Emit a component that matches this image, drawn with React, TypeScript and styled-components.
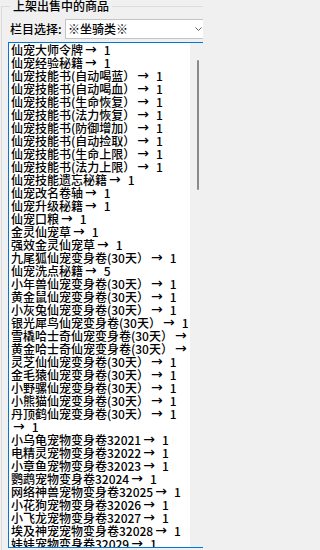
import React from "react";
import styled, { createGlobalStyle } from "styled-components";

const GlobalStyle = createGlobalStyle`
  html, body {
    margin: 0;
    padding: 0;
    background: #f0f0f0;
    overflow: hidden;
  }
  body {
    font-family: "Noto Sans CJK SC", "Liberation Sans", sans-serif;
    font-size: 12px;
    font-weight: 500;
    color: #000;
  }
`;

// whole dialog surface
const Window = styled.div`
  width: 203px;
  height: 550px;
  overflow: hidden;
  background: #f0f0f0;
`;

// group box with caption
const GroupBox = styled.fieldset`
  box-sizing: border-box;
  width: 240px;
  min-width: 0;
  margin: 0 0 0 1px;
  padding: 7px 0 0 8px;
  border: 1px solid #dcdcdc;
`;

const Caption = styled.legend`
  margin: 0;
  padding: 0 3px;
  font-size: 12px;
  line-height: 12px;
`;

// "栏目选择" row
const FilterRow = styled.div`
  display: flex;
  align-items: center;
  width: 198px;
  height: 20px;
  margin-bottom: 3px;
`;

const FilterLabel = styled.span`
  flex: 0 0 55px;
  line-height: 12px;
`;

const Combo = styled.div`
  box-sizing: border-box;
  flex: 0 0 143px;
  display: flex;
  align-items: center;
  justify-content: space-between;
  height: 20px;
  padding: 0 5px 0 2px;
  border: 1px solid #c4c4c4;
  background: #fff;
  line-height: 12px;
`;

// list box
const ListBox = styled.div`
  box-sizing: border-box;
  display: flex;
  width: 200px;
  height: 506px;
  margin-left: -2px;
  border: 1px solid #0078d7;
  background: #fff;
`;

const Items = styled.ul`
  flex: 1;
  min-width: 0;
  margin: 0;
  padding: 0 0 0 2px;
  list-style: none;
  overflow: hidden;
`;

const Item = styled.li`
  height: 13px;
  line-height: 13px;
  white-space: pre;
`;

const Arrow = styled.span`
  display: inline-block;
  margin: 0 7px 0 2px;
  font-family: "DejaVu Sans", sans-serif;
  font-size: 14px;
  font-weight: 400;
  line-height: 13px;
  vertical-align: top;
`;

const ScrollTrack = styled.div`
  flex: 0 0 17px;
  padding: 17px 0 0 7px;
  box-sizing: border-box;
  background: #f0f0f0;
`;

const Thumb = styled.div<{ $length: number }>`
  width: 2px;
  height: ${(p) => p.$length}px;
  background: #8a8a8a;
  border-radius: 1px;
`;

// bottom checkbox
const CheckRow = styled.label`
  display: flex;
  align-items: flex-start;
  gap: 3px;
  margin: 2px 0 0 10px;
  line-height: 13px;
`;

const CheckBox = styled.span`
  flex: 0 0 13px;
  height: 13px;
  border-radius: 3px;
  background: #0078d7;
`;

const items: [string, number][] = [
  ["仙宠大师令牌", 1],
  ["仙宠经验秘籍", 1],
  ["仙宠技能书(自动喝蓝）", 1],
  ["仙宠技能书(自动喝血）", 1],
  ["仙宠技能书(生命恢复）", 1],
  ["仙宠技能书(法力恢复）", 1],
  ["仙宠技能书(防御增加）", 1],
  ["仙宠技能书(自动捡取）", 1],
  ["仙宠技能书(生命上限）", 1],
  ["仙宠技能书(法力上限）", 1],
  ["仙宠技能遗忘秘籍", 1],
  ["仙宠改名卷轴", 1],
  ["仙宠升级秘籍", 1],
  ["仙宠口粮", 1],
  ["金灵仙宠草", 1],
  ["强效金灵仙宠草", 1],
  ["九尾狐仙宠变身卷(30天）", 1],
  ["仙宠洗点秘籍", 5],
  ["小年兽仙宠变身卷(30天）", 1],
  ["黄金鼠仙宠变身卷(30天）", 1],
  ["小灰兔仙宠变身卷(30天）", 1],
  ["银光犀鸟仙宠变身卷(30天）", 1],
  ["雪橇哈士奇仙宠变身卷(30天）", 1],
  ["黄金哈士奇仙宠变身卷(30天）", 1],
  ["灵芝仙仙宠变身卷(30天）", 1],
  ["金毛猿仙宠变身卷(30天）", 1],
  ["小野骡仙宠变身卷(30天）", 1],
  ["小熊猫仙宠变身卷(30天）", 1],
  ["丹顶鹤仙宠变身卷(30天）", 1],
  ["", 1],
  ["小乌龟宠物变身卷32021", 1],
  ["电精灵宠物变身卷32022", 1],
  ["小章鱼宠物变身卷32023", 1],
  ["鹦鹉宠物变身卷32024", 1],
  ["网络神兽宠物变身卷32025", 1],
  ["小花狗宠物变身卷32026", 1],
  ["小飞龙宠物变身卷32027", 1],
  ["埃及神宠宠物变身卷32028", 1],
  ["娃娃宠物变身卷32029", 1],
  ["小狮子宠物变身卷32030", 1],
];

const Chevron = () => (
  <svg width="7" height="4" viewBox="0 0 7 4">
    <polyline points="0.5,0.5 3.5,3.5 6.5,0.5" fill="none" stroke="#606060" strokeWidth="1" />
  </svg>
);

const App = () => {
  return (
    <Window>
      <GlobalStyle />
      <GroupBox>
        <Caption>上架出售中的商品</Caption>
        <FilterRow>
          <FilterLabel>栏目选择:</FilterLabel>
          <Combo>
            <span>※坐骑类※</span>
            <Chevron />
          </Combo>
        </FilterRow>
        <ListBox>
          <Items>
            {items.map(([name, count], i) => (
              <Item key={i}>
                {name}
                <Arrow>→</Arrow>
                {count}
              </Item>
            ))}
          </Items>
          <ScrollTrack>
            <Thumb $length={130} />
          </ScrollTrack>
        </ListBox>
        <CheckRow>
          <CheckBox />
          <span>只显示本店内可出售物品</span>
        </CheckRow>
      </GroupBox>
    </Window>
  );
};

export default App;
